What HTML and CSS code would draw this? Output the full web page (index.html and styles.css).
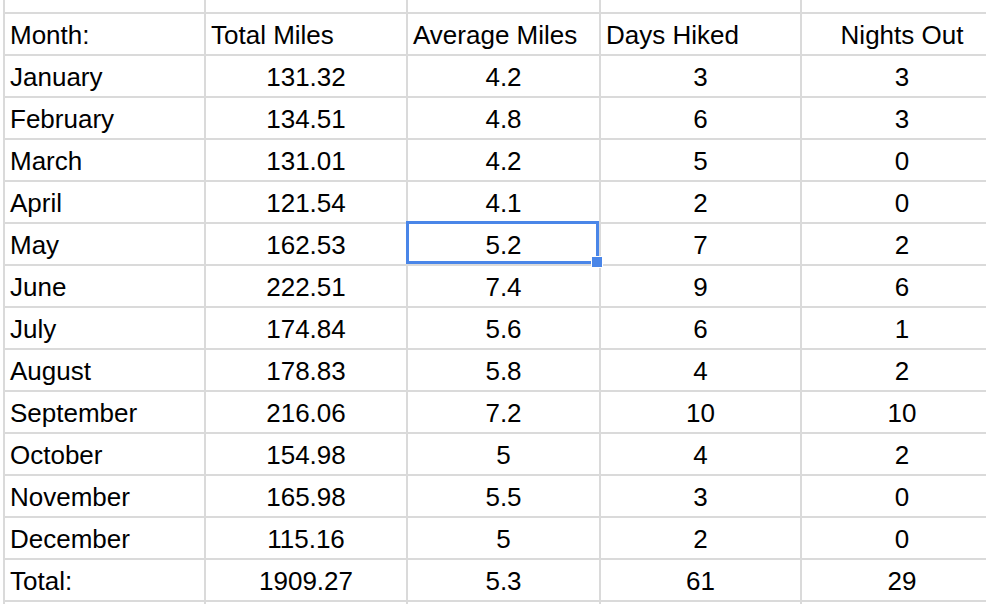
FILE: index.html
```html
<!DOCTYPE html>
<html>
<head>
<meta charset="utf-8">
<link rel="stylesheet" href="styles.css">
</head>
<body>
<div class="sheet">
  <div class="cell"></div><div class="cell"></div><div class="cell"></div><div class="cell"></div><div class="cell"></div>

  <div class="cell">Month:</div><div class="cell">Total Miles</div><div class="cell">Average Miles</div><div class="cell">Days Hiked</div><div class="cell c">Nights Out</div>

  <div class="cell">January</div><div class="cell c">131.32</div><div class="cell c">4.2</div><div class="cell c">3</div><div class="cell c">3</div>
  <div class="cell">February</div><div class="cell c">134.51</div><div class="cell c">4.8</div><div class="cell c">6</div><div class="cell c">3</div>
  <div class="cell">March</div><div class="cell c">131.01</div><div class="cell c">4.2</div><div class="cell c">5</div><div class="cell c">0</div>
  <div class="cell">April</div><div class="cell c">121.54</div><div class="cell c">4.1</div><div class="cell c">2</div><div class="cell c">0</div>
  <div class="cell">May</div><div class="cell c">162.53</div><div class="cell c selected">5.2</div><div class="cell c">7</div><div class="cell c">2</div>
  <div class="cell">June</div><div class="cell c">222.51</div><div class="cell c">7.4</div><div class="cell c">9</div><div class="cell c">6</div>
  <div class="cell">July</div><div class="cell c">174.84</div><div class="cell c">5.6</div><div class="cell c">6</div><div class="cell c">1</div>
  <div class="cell">August</div><div class="cell c">178.83</div><div class="cell c">5.8</div><div class="cell c">4</div><div class="cell c">2</div>
  <div class="cell">September</div><div class="cell c">216.06</div><div class="cell c">7.2</div><div class="cell c">10</div><div class="cell c">10</div>
  <div class="cell">October</div><div class="cell c">154.98</div><div class="cell c">5</div><div class="cell c">4</div><div class="cell c">2</div>
  <div class="cell">November</div><div class="cell c">165.98</div><div class="cell c">5.5</div><div class="cell c">3</div><div class="cell c">0</div>
  <div class="cell">December</div><div class="cell c">115.16</div><div class="cell c">5</div><div class="cell c">2</div><div class="cell c">0</div>
  <div class="cell">Total:</div><div class="cell c">1909.27</div><div class="cell c">5.3</div><div class="cell c">61</div><div class="cell c">29</div>

  <div class="cell"></div><div class="cell"></div><div class="cell"></div><div class="cell"></div><div class="cell"></div>
</div>
</body>
</html>
```

FILE: styles.css
```css
html, body {
  margin: 0;
  padding: 0;
  background: #ffffff;
  overflow: hidden;
}

body {
  width: 986px;
  height: 604px;
}

.sheet {
  margin-left: 3px;
  width: 1010px;
  display: grid;
  grid-template-columns: 199px 200px 191px 199px 200px;
  grid-template-rows: 12px repeat(14, 40px) 20px;
  gap: 2px;
  background: #dadada;
  border-left: 2px solid #dadada;
  font-family: "Liberation Sans", Arial, sans-serif;
  font-size: 26px;
  color: #000000;
}

.cell {
  background: #ffffff;
  line-height: 43px;
  padding: 0 5px;
  white-space: nowrap;
  overflow: visible;
}

.c {
  text-align: center;
}

.selected {
  position: relative;
}

.selected::before {
  content: "";
  position: absolute;
  left: -2px;
  top: -3px;
  right: 0;
  bottom: 0;
  border: 3px solid #4a86e8;
  box-sizing: border-box;
}

.selected::after {
  content: "";
  position: absolute;
  left: 183px;
  top: 32px;
  width: 10px;
  height: 10px;
  background: #4a86e8;
  border: 1px solid #ffffff;
}
```
